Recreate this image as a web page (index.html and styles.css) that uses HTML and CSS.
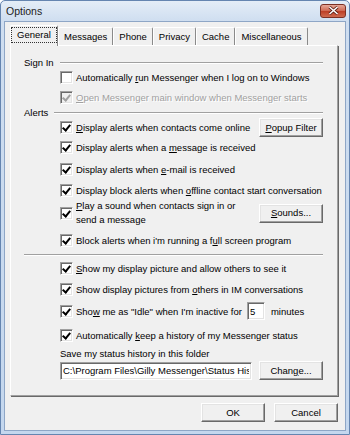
FILE: index.html
```html
<!DOCTYPE html>
<html lang="en">
<head>
    <meta charset="UTF-8">
    <title>Options</title>
    <link rel="stylesheet" href="styles.css">
</head>
<body>
<div class="window">
    <div class="titlebar">
        <span class="title">Options</span>
        <span class="close">
            <svg width="11" height="9" viewBox="0 0 11 9"><path d="M1.5 1 L9.5 8 M9.5 1 L1.5 8" stroke="#5a1d14" stroke-width="3"/><path d="M1.5 1 L9.5 8 M9.5 1 L1.5 8" stroke="#fff" stroke-width="1.6"/></svg>
        </span>
    </div>

    <div class="client">
        <div class="tabs">
            <div class="tab active"><span class="focus">General</span></div>
            <div class="tab">Messages</div>
            <div class="tab">Phone</div>
            <div class="tab">Privacy</div>
            <div class="tab">Cache</div>
            <div class="tab">Miscellaneous</div>
        </div>

        <div class="panel">
            <div class="group">Sign In<span class="rule"></span></div>
            <div class="row mt1"><span class="box"></span><span>Automatically <u>r</u>un Messenger when I log on to Windows</span></div>
            <div class="row mt6 disabled"><span class="box on"></span><span><u>O</u>pen Messenger main window when Messenger starts</span></div>

            <div class="group mt1">Alerts<span class="rule"></span></div>
            <div class="row mt1"><span class="box on"></span><span><u>D</u>isplay alerts when contacts come online</span><button class="btn side"><u>P</u>opup Filter</button></div>
            <div class="row mt6"><span class="box on"></span><span>Display alerts when a <u>m</u>essage is received</span></div>
            <div class="row mt8"><span class="box on"></span><span>Display alerts when <u>e</u>-mail is received</span></div>
            <div class="row mt7"><span class="box on"></span><span>Display block alerts when <u>o</u>ffline contact start conversation</span></div>
            <div class="row tall mt2"><span class="box on"></span><span><u>P</u>lay a sound when contacts sign in or<br>send a message</span><button class="btn side"><u>S</u>ounds...</button></div>
            <div class="row mt6"><span class="box on"></span><span>Block alerts when i'm running a f<u>u</u>ll screen program</span></div>

            <div class="sep"></div>

            <div class="row mt5"><span class="box on"></span><span><u>S</u>how my display picture and allow others to see it</span></div>
            <div class="row mt7"><span class="box on"></span><span>Show display pictures from <u>o</u>thers in IM conversations</span></div>
            <div class="row mt8"><span class="box on"></span><span>Sho<u>w</u> me as "Idle" when I'm inactive for</span><input class="field mins" type="text" value="5"><span>minutes</span></div>
            <div class="row mt10"><span class="box on"></span><span>Automatically <u>k</u>eep a history of my Messenger status</span></div>
            <div class="row mt4">Save my status history in this folder</div>
            <div class="row path mt1"><input class="field" type="text" value="C:\Program Files\Gilly Messenger\Status History"><button class="btn side">Chan<u>g</u>e...</button></div>
        </div>

        <div class="actions">
            <button class="btn">OK</button>
            <button class="btn">Cancel</button>
        </div>
    </div>
</div>
</body>
</html>
```

FILE: styles.css
```css
* {
    box-sizing: border-box;
}
body {
    margin: 0;
    font-family: "Liberation Sans", Arial, sans-serif;
    font-size: 9.5px;
    color: #000;
    background: #fff;
}
u {
    text-decoration-thickness: 1px;
    text-underline-offset: 1px;
}

/* window frame */
.window {
    width: 350px;
    height: 435px;
    display: flex;
    flex-direction: column;
    padding: 0 3px 3px;
    border: 1px solid #6585b0;
    border-radius: 5px 5px 0 0;
    background: linear-gradient(#e4edf7, #cfdef0 20px, #c4d7ee);
}
.titlebar {
    flex: none;
    height: 20px;
    display: flex;
    align-items: center;
    justify-content: space-between;
    padding: 0 0 1px 2px;
}
.title {
    font-size: 10.5px;
    color: #1c1c1c;
}
.close {
    width: 26px;
    height: 14px;
    display: flex;
    align-items: center;
    justify-content: center;
    border: 1px solid #7c3024;
    border-radius: 3px;
    background: linear-gradient(#e6a898, #d06a54 48%, #bd3f26 52%, #cf6a4f);
}

.client {
    flex: 1;
    display: flex;
    flex-direction: column;
    padding: 3px 7px 0 5px;
    border: 1px solid #8ea6c6;
    background: #f0f0f0;
}

/* tabs */
.tabs {
    height: 20px;
    display: flex;
    align-items: flex-end;
}
.tab {
    height: 18px;
    display: flex;
    align-items: center;
    padding: 0 5px;
    border-left: 1px solid #fff;
    border-top: 1px solid #fff;
    border-right: 1px solid #8a8a8a;
    border-radius: 2px 2px 0 0;
}
.tab.active {
    width: 48px;
    height: 21px;
    margin-bottom: -1px;
    padding: 0 1px 2px;
    position: relative;
    z-index: 1;
    background: #f0f0f0;
}
.focus {
    flex: 1;
    text-align: center;
    padding: 1px 0 2px;
    outline: 1px dotted #333;
}

.panel {
    height: 351px;
    padding: 9px 14px 0 13px;
    border: 1px solid #fff;
    border-right-color: #a0a0a0;
    border-bottom-color: #a0a0a0;
    box-shadow: 1px 1px 0 #696969;
}

.group {
    height: 14px;
    display: flex;
    align-items: center;
}
.rule {
    flex: 1;
    height: 2px;
    margin: 2px 0 0 6px;
    border-top: 1px solid #a0a0a0;
    border-bottom: 1px solid #fff;
}
.sep {
    height: 2px;
    margin-top: 7px;
    border-top: 1px solid #a0a0a0;
    border-bottom: 1px solid #fff;
}

.row {
    height: 14px;
    display: flex;
    align-items: center;
    margin-left: 36px;
    white-space: nowrap;
}
.row.tall {
    height: 28px;
    line-height: 14px;
}
.row.disabled {
    color: #a0a0a0;
    text-shadow: 1px 1px 0 #fff;
}
.mt1 { margin-top: 1px; }
.mt2 { margin-top: 2px; }
.mt4 { margin-top: 4px; }
.mt5 { margin-top: 5px; }
.mt6 { margin-top: 6px; }
.mt7 { margin-top: 7px; }
.mt8 { margin-top: 8px; }
.mt10 { margin-top: 10px; }

/* classic checkbox */
.box {
    flex: none;
    width: 13px;
    height: 13px;
    margin-right: 3px;
    position: relative;
    background: #fff;
    border: 1px solid;
    border-color: #a0a0a0 #fff #fff #a0a0a0;
    box-shadow: inset 1px 1px 0 #696969, inset -1px -1px 0 #e3e3e3;
}
.box.on::after {
    content: "";
    position: absolute;
    left: 3px;
    top: 1px;
    width: 3px;
    height: 6px;
    border-right: 2px solid #000;
    border-bottom: 2px solid #000;
    transform: rotate(40deg);
}
.disabled .box {
    background: #f0f0f0;
}
.disabled .box.on::after {
    border-color: #a0a0a0;
}

/* buttons and fields */
.btn {
    width: 64px;
    height: 19px;
    padding: 0;
    font: inherit;
    color: #000;
    background: #f0f0f0;
    border: 1px solid;
    border-color: #fff #696969 #696969 #fff;
    box-shadow: inset -1px -1px 0 #a0a0a0, inset 1px 1px 0 #e3e3e3;
}
.btn.side {
    flex: none;
    margin-left: auto;
}
.field {
    height: 18px;
    padding: 0 2px;
    font: inherit;
    color: #000;
    background: #fff;
    border: 1px solid;
    border-color: #a0a0a0 #fff #fff #a0a0a0;
    box-shadow: inset 1px 1px 0 #696969, inset -1px -1px 0 #e3e3e3;
    outline: none;
}
.field.mins {
    width: 18px;
    margin: 0 6px 0 5px;
}
.row.path {
    height: 19px;
}
.row.path .field {
    width: 192px;
}

.actions {
    display: flex;
    justify-content: flex-end;
    gap: 9px;
    margin-top: 7px;
}
```
